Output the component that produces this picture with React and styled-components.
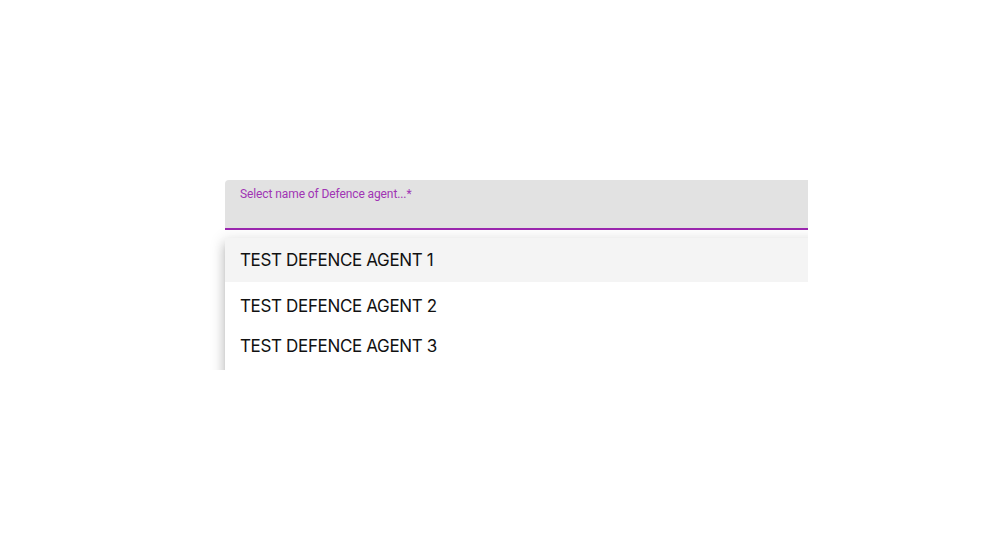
import React from 'react';
import styled, { createGlobalStyle } from 'styled-components';

const GlobalStyle = createGlobalStyle`
  html, body {
    margin: 0;
    padding: 0;
    background: #ffffff;
  }
  body {
    font-family: Roboto, "Liberation Sans", sans-serif;
  }
`;

const agents = ['TEST DEFENCE AGENT 1', 'TEST DEFENCE AGENT 2', 'TEST DEFENCE AGENT 3'];

function App() {
  return (
    <>
      <GlobalStyle />
      <Page>
        <Viewport>
          <Field>
            <Label>Select name of Defence agent...*</Label>
          </Field>
          <Menu>
            {agents.map((name, i) => (
              <Option key={name} active={i === 0} first={i === 0}>
                {name}
              </Option>
            ))}
          </Menu>
        </Viewport>
      </Page>
    </>
  );
}
export default App;

const Page = styled.div`
  width: 1000px;
  height: 560px;
  padding-top: 170px;
  padding-left: 208px;
  box-sizing: border-box;
`;
const Viewport = styled.div`
  width: 600px;
  height: 200px;
  overflow: hidden;
  padding: 10px 0 0 17px;
  box-sizing: border-box;
  display: flex;
  flex-direction: column;
  gap: 8px;
`;
const Field = styled.div`
  width: 620px;
  height: 50px;
  flex-shrink: 0;
  background: #e2e2e2;
  border-radius: 4px 4px 0 0;
  border-bottom: 2px solid #9c27b0;
  box-sizing: border-box;
  padding: 7px 15px 0;
`;
const Label = styled.div`
  font-family: Roboto, "Liberation Sans", sans-serif;
  font-size: 12px;
  line-height: 14px;
  letter-spacing: -0.1px;
  color: #a034b4;
`;
const Menu = styled.div`
  width: 620px;
  flex-shrink: 0;
  padding-bottom: 20px;
  background: #ffffff;
  box-shadow: 0 5px 5px -3px rgba(0, 0, 0, 0.2), 0 8px 10px 1px rgba(0, 0, 0, 0.14),
    0 3px 14px 2px rgba(0, 0, 0, 0.12);
  display: flex;
  flex-direction: column;
`;
const Option = styled.div`
  height: ${(p) => (p.first ? '44px' : '40px')};
  margin-bottom: ${(p) => (p.first ? '4px' : '0')};
  display: flex;
  align-items: center;
  padding: 0 15px;
  background: ${(p) => (p.active ? '#f4f4f4' : '#ffffff')};
  font-family: Inter, "Liberation Sans", sans-serif;
  font-size: 17px;
  letter-spacing: -0.35px;
  color: #111111;
`;
